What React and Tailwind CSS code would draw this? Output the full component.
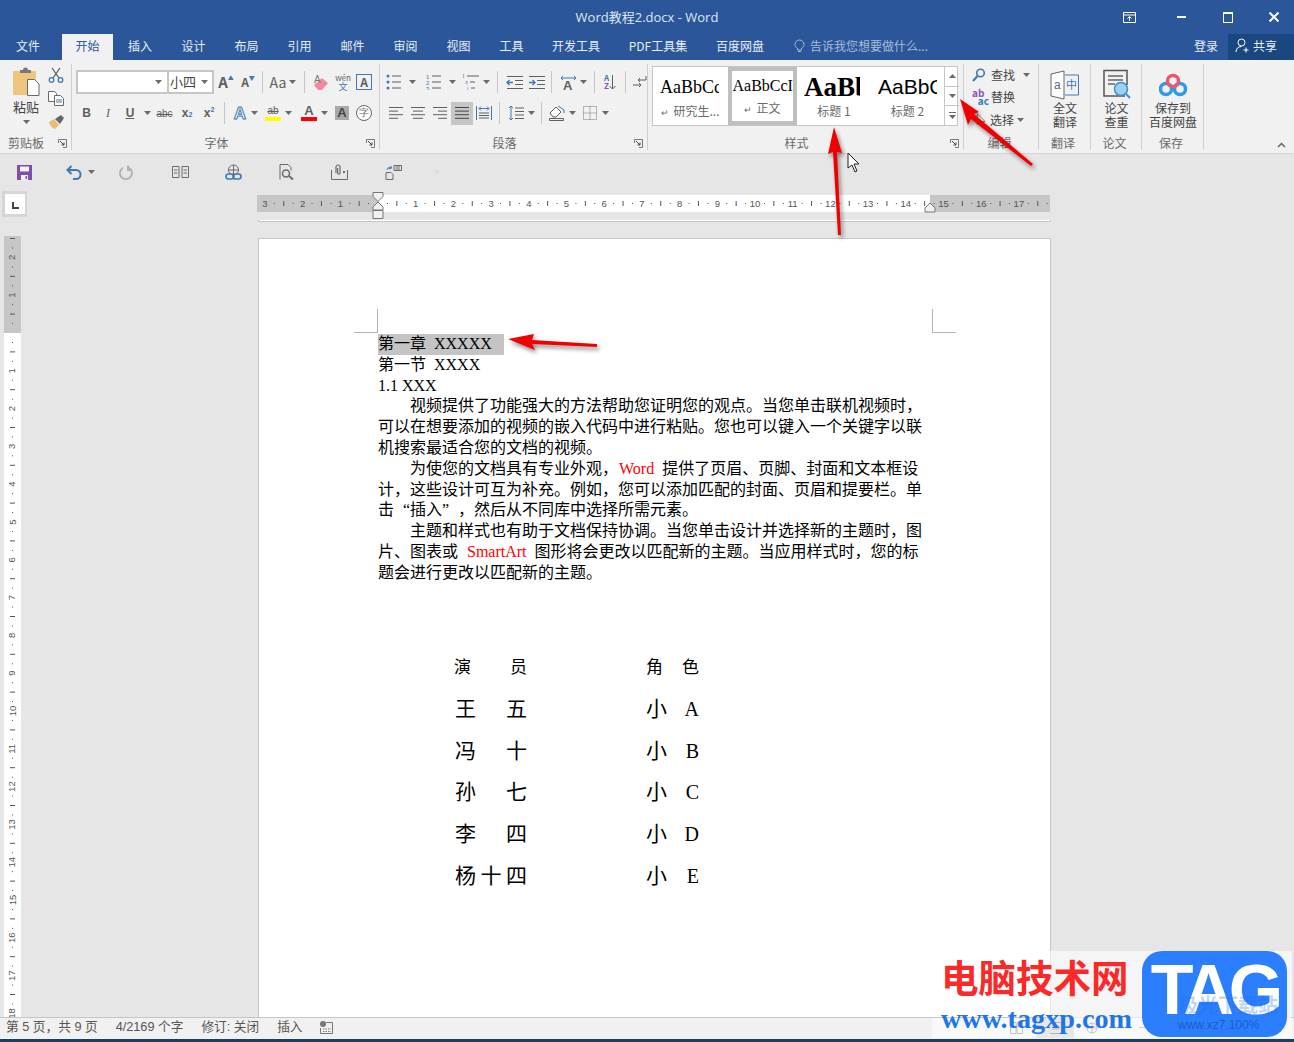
import React from "react";

const tabs = [
  ["文件", "w-[62px] pr-[6px]"],
  ["开始", "w-[51px] bg-[#f1f1f1] text-[#2b579a]"],
  ["插入", "w-[54px]"],
  ["设计", "w-[53px]"],
  ["布局", "w-[53px]"],
  ["引用", "w-[53px]"],
  ["邮件", "w-[53px]"],
  ["审阅", "w-[53px]"],
  ["视图", "w-[53px]"],
  ["工具", "w-[53px]"],
  ["开发工具", "w-[76px]"],
  ["PDF工具集", "w-[88px]"],
  ["百度网盘", "w-[76px]"],
];

const Caret = () => (
  <svg width="7" height="4" viewBox="0 0 7 4" className="shrink-0">
    <path d="M0 0h7L3.500 4z" fill="#6a6a6a" />
  </svg>
);

const Launcher = () => (
  <svg width="9" height="9" viewBox="0 0 9 9" fill="none" stroke="#777">
    <path d="M.5 4V.5H8.500V8.500H5" />
    <path d="M2 2l4 4M6 3.500V6H3.500" stroke="#444" />
  </svg>
);

const Sep = ({ c = "" }) => <div className={`h-[22px] w-px shrink-0 bg-[#c6c6c6] ${c}`} />;

const Tool = ({ c = "w-[22px]", children }) => (
  <div className={`flex h-6 shrink-0 items-center justify-center ${c}`}>{children}</div>
);

// horizontal lines in the alignment buttons
const Lines = ({ rows, color = "#5f5f5f" }) => (
  <svg width="16" height="14" viewBox="0 0 16 14" stroke={color} fill="none">
    {rows.map(([a, b], i) => (
      <path key={i} d={`M${a} ${1.5 + i * 3.6}H${b}`} />
    ))}
  </svg>
);

const ListIcon = ({ marks }) => (
  <svg width="16" height="16" viewBox="0 0 16 16">
    {[2, 8, 14].map((y, i) => (
      <g key={y}>
        {marks === "dot" ? (
          <circle cx="2" cy={y} r="1.500" fill="#3f78b5" />
        ) : (
          <text x="0" y={y + 2.5} fontSize="6" fill="#3f78b5" fontFamily="Liberation Sans">
            {i + 1}
          </text>
        )}
        <path d={`M6 ${y}H15`} stroke="#5f5f5f" />
      </g>
    ))}
  </svg>
);

const Group = ({ c, label, launcher, children }) => (
  <div className={`flex h-full shrink-0 flex-col border-r border-[#d0d0d0] ${c}`}>
    <div className="min-h-0 flex-1">{children}</div>
    <div className="flex h-[14px] items-center text-[12px] text-[#6a6a6a]">
      <div className="flex-1" />
      <span className={`leading-none ${launcher ? "pr-[14px]" : "pl-[1px]"}`}>{label}</span>
      <div className="flex flex-1 justify-end pr-[4px]">{launcher && <Launcher />}</div>
    </div>
  </div>
);

const Big = ({ lines, children }) => (
  <div className="flex flex-col items-center pl-[1px] pt-[4px] text-[12px] leading-[14px] text-[#444]">
    <div className="flex h-[33px] items-center">{children}</div>
    {lines.map((l) => (
      <span key={l}>{l}</span>
    ))}
  </div>
);

function Clipboard() {
  const cell = "flex h-[22px] w-[22px] items-center justify-center";
  return (
    <Group c="w-[72px]" label="剪贴板" launcher>
      <div className="flex pl-[10px] pt-[3px]">
        <div className="flex w-[32px] flex-col items-center text-[13px] leading-[16px] text-[#444]">
          <svg width="30" height="29" viewBox="0 0 30 29">
            <rect x="2" y="4" width="23" height="24" rx="1" fill="#efc67d" />
            <path d="M9 5V3h3a2 2 0 0 1 5 0h3v3H9z" fill="#777" />
            <path d="M16.500 12.500h7l4.500 4.500v11.500H16.500z" fill="#fff" stroke="#6a6a6a" />
          </svg>
          <span className="mt-[3px]">粘贴</span>
          <div className="mt-[5px]"><Caret /></div>
        </div>
        <div className="ml-[3px] mt-[-3px] flex flex-col items-center gap-[1px]">
          <div className={cell}>
            <svg width="16" height="16" viewBox="0 0 16 16" fill="none" stroke="#5f5f5f" strokeWidth="1.300">
              <path d="M4 1l7 10M12 1L5 11" />
              <circle cx="3.500" cy="13" r="2.300" stroke="#3f78b5" />
              <circle cx="12.500" cy="13" r="2.300" stroke="#3f78b5" />
            </svg>
          </div>
          <div className={cell}>
            <svg width="16" height="15" viewBox="0 0 16 15" fill="#fff" stroke="#6a6a6a">
              <path d="M.5.500h6l2 2v8H.5z" />
              <path d="M6.500 4.500h6l3 3v7h-9z" />
              <path d="M8 9h6M8 11h6" stroke="#3f78b5" />
            </svg>
          </div>
          <div className={cell}>
            <svg width="17" height="15" viewBox="0 0 17 15">
              <path d="M1 8l5-3 5 6-4 4C5 15 1 11 1 8z" fill="#e9bd78" />
              <path d="M7 5l6-4 3 3-4 6z" fill="#666" />
            </svg>
          </div>
        </div>
      </div>
    </Group>
  );
}

function Font() {
  return (
    <Group c="w-[308px]" label="字体" launcher>
      <div className="flex flex-col gap-[7px] pl-[4px] pt-[6px] text-[#5f5f5f]">
        <div className="flex items-center">
          <div className="flex h-[24px] w-[91px] items-center justify-end border-2 border-r-0 border-[#c6c6c6] bg-white pr-[5px]">
            <Caret />
          </div>
          <div className="flex h-[24px] w-[47px] items-center justify-between border-2 border-[#c6c6c6] bg-white pl-[1px] pr-[4px] text-[13px] text-[#444]">
            小四
            <Caret />
          </div>
          <Tool c="ml-[1px] w-[22px] text-[15px] font-semibold">
            A<span className="mb-[9px] text-[6px] text-[#3f78b5]">▲</span>
          </Tool>
          <Tool c="w-[22px] text-[12px] font-semibold">
            A<span className="mb-[9px] text-[6px] text-[#3f78b5]">▼</span>
          </Tool>
          <Sep c="ml-[3px]" />
          <Tool c="ml-[4px] w-[22px] text-[14px]">Aa</Tool>
          <Caret />
          <Sep c="ml-[8px]" />
          <Tool c="ml-[5px] w-[22px]">
            <svg width="16" height="17" viewBox="0 0 16 17">
              <path d="M1 11l8-7 6 5-6 7H5z" fill="#ee8c9c" />
              <text x="1" y="9" fontSize="10" fill="#777" fontFamily="Liberation Sans">A</text>
            </svg>
          </Tool>
          <Tool c="w-[22px]">
            <div className="flex flex-col items-center text-[8px] leading-[9px]">
              <span>wén</span>
              <span className="text-[9px] text-[#3f78b5]">文</span>
            </div>
          </Tool>
          <div className="ml-[2px] flex h-[16px] w-[16px] items-center justify-center border border-[#3f78b5] text-[12px] font-bold leading-none">A</div>
        </div>
        <div className="flex items-center font-['Liberation_Sans',sans-serif] text-[12px]">
          <Tool c="w-[21px] font-bold">B</Tool>
          <Tool c="w-[22px] font-['Liberation_Serif',serif] italic">I</Tool>
          <Tool c="w-[22px] font-bold underline">U</Tool>
          <Tool c="w-[12px]"><Caret /></Tool>
          <Tool c="w-[23px] text-[10px] line-through">abc</Tool>
          <Tool c="w-[22px] font-bold">x<sub className="text-[7px] text-[#3f78b5]">2</sub></Tool>
          <Tool c="w-[22px] font-bold">x<sup className="text-[7px] text-[#3f78b5]">2</sup></Tool>
          <Sep c="ml-[4px]" />
          <Tool c="ml-[4px] w-[22px]">
            <span className="text-[17px] font-bold leading-none text-white [-webkit-text-stroke:1px_#3f78b5]">A</span>
          </Tool>
          <Caret />
          <Tool c="ml-[4px] w-[22px]">
            <div className="flex flex-col items-center">
              <span className="text-[10px] leading-[12px] line-through">ab</span>
              <div className="h-[4px] w-[16px] bg-[#ffff00]" />
            </div>
          </Tool>
          <div className="ml-[1px]"><Caret /></div>
          <Tool c="ml-[6px] w-[22px]">
            <div className="flex flex-col items-center">
              <span className="text-[13px] font-bold leading-[12px]">A</span>
              <div className="h-[4px] w-[16px] bg-[#ff0000]" />
            </div>
          </Tool>
          <div className="ml-[1px]"><Caret /></div>
          <div className="ml-[7px] flex h-[14px] w-[14px] items-center justify-center bg-[#a9a9a9] text-[13px] font-bold text-[#444]">A</div>
          <div className="ml-[7px] flex h-[16px] w-[16px] items-center justify-center rounded-full border border-[#666] bg-white text-[10px] leading-none">字</div>
        </div>
      </div>
    </Group>
  );
}

function Paragraph() {
  return (
    <Group c="w-[268px]" label="段落" launcher>
      <div className="flex flex-col gap-[7px] pl-[6px] pt-[6px]">
        <div className="flex items-center">
          <Tool c="w-[16px]"><ListIcon marks="dot" /></Tool>
          <Tool c="ml-[5px] w-[10px]"><Caret /></Tool>
          <Tool c="ml-[9px] w-[16px]"><ListIcon marks="num" /></Tool>
          <Tool c="ml-[5px] w-[10px]"><Caret /></Tool>
          <Tool c="ml-[3px] w-[22px]">
            <svg width="18" height="16" viewBox="0 0 18 16" stroke="#5f5f5f">
              <path d="M5 2h12M8 8h5M9 14h4" />
              <text x="0" y="4" fontSize="5" fill="#3f78b5" stroke="none">1</text>
              <text x="3" y="10" fontSize="5" fill="#3f78b5" stroke="none">a</text>
              <text x="5" y="15.500" fontSize="5" fill="#3f78b5" stroke="none">i</text>
            </svg>
          </Tool>
          <Tool c="w-[8px]"><Caret /></Tool>
          <Sep c="ml-[7px]" />
          <Tool c="ml-[5px] w-[22px]">
            <svg width="17" height="13" viewBox="0 0 17 13" stroke="#5f5f5f" fill="none">
              <path d="M1 .5h16M9 4.500h8M9 8.500h8M1 12.500h16" />
              <path d="M7 6.500H1M3.500 4L1 6.500 3.500 9" stroke="#3f78b5" strokeWidth="1.400" />
            </svg>
          </Tool>
          <Tool c="w-[22px]">
            <svg width="17" height="13" viewBox="0 0 17 13" stroke="#5f5f5f" fill="none">
              <path d="M1 .5h16M9 4.500h8M9 8.500h8M1 12.500h16" />
              <path d="M1 6.500h6M4.500 4L7 6.500 4.500 9" stroke="#3f78b5" strokeWidth="1.400" />
            </svg>
          </Tool>
          <Sep c="ml-[4px]" />
          <Tool c="ml-[5px] w-[22px]">
            <svg width="17" height="15" viewBox="0 0 17 15">
              <path d="M1 3h15M3 1L1 3l2 2M14 1l2 2-2 2" stroke="#3f78b5" fill="none" />
              <text x="3" y="14.500" fontSize="13" fontWeight="bold" fill="#5f5f5f" fontFamily="Liberation Sans">A</text>
            </svg>
          </Tool>
          <Tool c="w-[8px]"><Caret /></Tool>
          <Sep c="ml-[7px]" />
          <Tool c="ml-[4px] w-[22px]">
            <div className="flex items-center">
              <div className="flex flex-col text-[8px] font-bold leading-[8px]">
                <span className="text-[#3f78b5]">A</span>
                <span className="text-[#8a55b0]">Z</span>
              </div>
              <svg width="7" height="15" viewBox="0 0 7 15" stroke="#5f5f5f" fill="none">
                <path d="M3.500 0v14M.5 11l3 3 3-3" />
              </svg>
            </div>
          </Tool>
          <Sep c="ml-[4px]" />
          <Tool c="ml-[3px] w-[22px]">
            <svg width="14" height="14" viewBox="0 0 14 14" stroke="#5f5f5f" fill="none">
              <path d="M13 1v4H5M7 3L5 5l2 2M0 10h8M6 8l2 2-2 2" />
            </svg>
          </Tool>
        </div>
        <div className="flex items-center">
          <Tool c="ml-[-1px] w-[22px]"><Lines rows={[[1, 15], [1, 10], [1, 15], [1, 10]]} /></Tool>
          <Tool><Lines rows={[[1, 15], [3, 13], [1, 15], [3, 13]]} /></Tool>
          <Tool><Lines rows={[[1, 15], [6, 15], [1, 15], [6, 15]]} /></Tool>
          <div className="flex h-[23px] w-[22px] items-center justify-center bg-[#c6c6c6]">
            <Lines rows={[[1, 15], [1, 15], [1, 15], [1, 15]]} color="#444" />
          </div>
          <Tool>
            <svg width="16" height="16" viewBox="0 0 16 16" fill="none" stroke="#5f5f5f">
              <path d="M.5 1v14M15.500 1v14" stroke="#3f78b5" />
              <path d="M3 3.500h10M5 1.500L3 3.500l2 2M11 1.500l2 2-2 2" stroke="#3f78b5" />
              <path d="M3 8h10M3 10.500h10M3 13h10" />
            </svg>
          </Tool>
          <Sep c="ml-[4px]" />
          <Tool c="ml-[5px] w-[22px]">
            <svg width="16" height="16" viewBox="0 0 16 16" fill="none" stroke="#5f5f5f">
              <path d="M7 3h9M7 6.500h9M7 10h9M7 13.500h9" />
              <path d="M3 1v14M1 3l2-2 2 2M1 13l2 2 2-2" stroke="#3f78b5" />
            </svg>
          </Tool>
          <Tool c="w-[8px]"><Caret /></Tool>
          <Sep c="ml-[6px]" />
          <Tool c="ml-[4px] w-[22px]">
            <svg width="18" height="16" viewBox="0 0 18 16" fill="none" stroke="#5f5f5f">
              <path d="M2 8l6-6 5 5-5 5H5z" fill="#fff" />
              <path d="M10 1l6 4v3" stroke="#3f78b5" />
              <path d="M1.500 13.500h14v2h-14z" />
            </svg>
          </Tool>
          <Tool c="w-[8px]"><Caret /></Tool>
          <Tool c="ml-[3px] w-[22px]">
            <svg width="14" height="14" viewBox="0 0 14 14" fill="none" stroke="#777" strokeDasharray="1 1">
              <path d="M.5.500h13v13H.5zM.5 7h13M7 .5v13" />
            </svg>
          </Tool>
          <Tool c="w-[8px]"><Caret /></Tool>
        </div>
      </div>
    </Group>
  );
}

const StyleItem = ({ c, f, w = "w-[59px]", name, mark }) => (
  <div className={`flex h-full shrink-0 flex-col overflow-hidden text-black ${c}`}>
    <span className={`ml-[7px] mt-[6px] h-[28px] overflow-hidden whitespace-nowrap leading-[28px] ${w} ${f}`}>AaBbCc</span>
    <span className="text-center text-[12px] leading-[20px] text-[#6a6a6a]">
      {mark && <span className="mr-[4px] text-[9px]">↵</span>}
      {name}
    </span>
  </div>
);

function Styles() {
  const cell = "flex flex-1 items-center justify-center";
  return (
    <Group c="w-[316px]" label="样式" launcher>
      <div className="ml-[4px] mt-[2px] flex h-[60px] w-[306px] border border-[#c6c6c6] bg-white">
        <StyleItem c="w-[75px]" f="font-['Liberation_Serif',serif] text-[18px]" name="研究生..." mark />
        <div className="flex h-full w-[69px] shrink-0 flex-col items-center overflow-hidden border-4 border-[#bfbfbf] text-[#444]">
          <span className="mt-[2px] h-[26px] w-[60px] overflow-hidden whitespace-nowrap text-center font-['Liberation_Serif',serif] text-[16px] leading-[26px] text-black">AaBbCcI</span>
          <span className="text-[12px] leading-[18px] text-[#6a6a6a]"><span className="mr-[4px] text-[9px]">↵</span>正文</span>
        </div>
        <StyleItem c="w-[74px]" w="w-[56px]" f="font-['Liberation_Serif',serif] text-[27px] font-bold" name="标题 1" />
        <StyleItem c="w-[73px]" f="font-['Liberation_Sans',sans-serif] text-[21px]" name="标题 2" />
        <div className="flex w-[15px] shrink-0 flex-col border-l border-[#c6c6c6]">
          <div className={`${cell} border-b border-[#c6c6c6]`}>
            <svg width="7" height="4" viewBox="0 0 7 4"><path d="M0 4h7L3.500 0z" fill="#6a6a6a" /></svg>
          </div>
          <div className={`${cell} border-b border-[#c6c6c6]`}>
            <Caret />
          </div>
          <div className={cell}>
            <svg width="7" height="7" viewBox="0 0 7 7"><path d="M0 0h7v1H0zM0 3h7L3.500 7z" fill="#6a6a6a" /></svg>
          </div>
        </div>
      </div>
    </Group>
  );
}

function Editing() {
  return (
    <Group c="w-[75px]" label="编辑">
      <div className="flex flex-col gap-[1.500px] pl-[8px] text-[12px] text-[#444]">
        <div className="flex h-[21px] items-center gap-[5px]">
          <svg width="14" height="14" viewBox="0 0 14 14" fill="none" strokeWidth="1.600">
            <circle cx="8.500" cy="5" r="3.800" stroke="#3f78b5" />
            <path d="M5.500 8L1 13" stroke="#3f78b5" strokeWidth="2" />
          </svg>
          查找
          <div className="ml-[3px]"><Caret /></div>
        </div>
        <div className="flex h-[21px] items-center gap-[2px]">
          <div className="flex w-[17px] flex-col text-[10px] font-bold leading-[8px]">
            <span className="text-[#8a55b0]">ab</span>
            <span className="text-right text-[#3f78b5]">ac</span>
          </div>
          替换
        </div>
        <div className="flex h-[21px] items-center gap-[1px] pl-[18px]">
          选择
          <div className="ml-[2px]"><Caret /></div>
        </div>
      </div>
    </Group>
  );
}

const TranslateIcon = () => (
  <svg width="30" height="30" viewBox="0 0 30 30" fill="none">
    <path d="M1 4l13-3v28L1 26z" stroke="#666" fill="#fff" />
    <path d="M15 5h13.500v20H15" stroke="#3f78b5" />
    <text x="4" y="19" fontSize="12" fill="#666" fontFamily="Liberation Sans">a</text>
    <text x="16" y="19" fontSize="11" fill="#3f78b5" fontFamily="Noto Sans CJK SC">中</text>
  </svg>
);

const PaperIcon = () => (
  <svg width="29" height="32" viewBox="0 0 29 32" fill="none">
    <path d="M23 27H2V1.500h23V16" stroke="#555" strokeWidth="1.500" />
    <path d="M6 7h15M6 11h15M6 15h7" stroke="#666" strokeWidth="1.500" />
    <circle cx="19" cy="20" r="6.500" fill="#9fd0f2" stroke="#3f8fcb" strokeWidth="1.500" />
    <path d="M24 25l4 4" stroke="#3f8fcb" strokeWidth="2" />
  </svg>
);

const CloudIcon = () => (
  <svg width="28" height="24" viewBox="0 0 28 24" fill="none" strokeWidth="3.500">
    <circle cx="7" cy="16" r="5.500" stroke="#2f9be8" />
    <circle cx="21" cy="16" r="5.500" stroke="#2f9be8" />
    <circle cx="14" cy="8" r="5.500" stroke="#e8596f" />
  </svg>
);

function Ribbon() {
  return (
    <div className="flex h-[94px] shrink-0 items-stretch border-b border-[#d4d4d4] bg-[#f1f1f1] pb-[3px] pt-[4px] font-['Noto_Sans_CJK_SC',sans-serif]">
      <Clipboard />
      <Font />
      <Paragraph />
      <Styles />
      <Editing />
      <Group c="w-[52px]" label="翻译">
        <Big lines={["全文", "翻译"]}><TranslateIcon /></Big>
      </Group>
      <Group c="w-[51px]" label="论文">
        <Big lines={["论文", "查重"]}><PaperIcon /></Big>
      </Group>
      <Group c="w-[62px]" label="保存">
        <Big lines={["保存到", "百度网盘"]}><CloudIcon /></Big>
      </Group>
      <div className="flex flex-1 items-end justify-end pb-[2px] pr-[8px]">
        <svg width="9" height="6" viewBox="0 0 9 6" fill="none" stroke="#666" strokeWidth="1.500">
          <path d="M1 5l3.500-3.500L8 5" />
        </svg>
      </div>
    </div>
  );
}

function Quick() {
  const qc = "flex h-[20px] w-[20px] items-center justify-center";
  return (
    <div className="flex h-[36px] shrink-0 items-center bg-[#e6e6e6] pl-[14px]">
      <div className={qc}>
        <svg width="15" height="15" viewBox="0 0 15 15">
          <path d="M0 0h15v15H0z" fill="#7d4fa8" />
          <path d="M3 1.500h9v5H3z" fill="#f1f1f1" />
          <path d="M4 10h7v5H4z" fill="#f1f1f1" />
          <path d="M8.500 11h1.500v3H8.500z" fill="#7d4fa8" />
        </svg>
      </div>
      <div className={`ml-[30px] ${qc}`}>
        <svg width="16" height="15" viewBox="0 0 16 15" fill="none" stroke="#3f78b5" strokeWidth="2">
          <path d="M5.500 1L1.500 5l4 4M2 5h8a4.500 4.500 0 0 1 0 9H7" />
        </svg>
      </div>
      <div className="ml-[4px]"><Caret /></div>
      <div className={`ml-[21px] ${qc}`}>
        <svg width="14" height="15" viewBox="0 0 14 15" fill="none" stroke="#b4b4b4" strokeWidth="2">
          <path d="M9 2.500a6 6 0 1 1-5 .4M9 .5v4.500H13" />
        </svg>
      </div>
      <div className={`ml-[34px] ${qc}`}>
        <svg width="17" height="12" viewBox="0 0 17 12" fill="none" stroke="#6a6a6a">
          <path d="M.5.500h6.500v11H.5zM10 .5h6.500v11H10zM2 4h3.500M2 7h3.500M11.500 4H15M11.500 7H15" />
        </svg>
      </div>
      <div className={`ml-[33px] ${qc}`}>
        <svg width="17" height="17" viewBox="0 0 17 17" fill="none" stroke="#6a6a6a">
          <circle cx="8.500" cy="6" r="5" />
          <path d="M3.500 6h10M8.500 1v10" />
          <rect x="1" y="10" width="8" height="5" rx="2.500" stroke="#3f78b5" strokeWidth="1.600" />
          <rect x="8" y="10" width="8" height="5" rx="2.500" stroke="#3f78b5" strokeWidth="1.600" />
        </svg>
      </div>
      <div className={`ml-[33px] ${qc}`}>
        <svg width="15" height="16" viewBox="0 0 15 16" fill="none" stroke="#6a6a6a">
          <path d="M1 15.500V.5h8l3 3v3" />
          <circle cx="7" cy="9.500" r="3.500" strokeWidth="1.500" />
          <path d="M10 12l4 3.500" strokeWidth="2" />
        </svg>
      </div>
      <div className={`ml-[33px] ${qc}`}>
        <svg width="17" height="16" viewBox="0 0 17 16" fill="none" stroke="#6a6a6a">
          <path d="M.5 6v9.500h16V6" />
          <path d="M5 9V3a2 2 0 0 1 4 0v6a1.200 1.200 0 0 1-2.400 0V4" strokeWidth="1.200" />
          <path d="M12 7h2v2h-2z" fill="#3f78b5" stroke="none" />
        </svg>
      </div>
      <div className={`ml-[34px] ${qc}`}>
        <svg width="17" height="16" viewBox="0 0 17 16" fill="none" stroke="#6a6a6a">
          <path d="M1 8.500h5l2 2v5H1z" />
          <path d="M9 1.500h7.500v5H9zM10.500 3h4.500M10.500 5h4.500" />
          <path d="M2 6a3 3 0 0 1 5-2M6 2v2.500H3.500" stroke="#3f78b5" />
        </svg>
      </div>
      <div className="ml-[32px] text-[7px] text-[#d6d6d6]">▾</div>
    </div>
  );
}

function HRuler() {
  const x0 = 121;
  const step = 37.7;
  const cells = [];
  for (let n = -4; n <= 18; n++) {
    const x = x0 + n * step;
    if (n !== 0 && n >= -3 && n <= 17) {
      cells.push(
        <text key={`n${n}`} x={x} y="16" fontSize="9.500" fill="#555" textAnchor="middle" fontFamily="Liberation Sans">
          {Math.abs(n)}
        </text>
      );
    }
    [0.25, 0.5, 0.75].forEach((f) => {
      const tx = x + f * step;
      if (tx < 1 || tx > 792) return;
      cells.push(<path key={`${n}${f}`} d={f === 0.5 ? `M${tx} 10v5` : `M${tx} 12v1`} stroke="#555" />);
    });
  }
  return (
    <svg width="793" height="29" viewBox="0 0 793 29" className="mt-[1px] block">
      <rect x="0" y="4" width="793" height="17" fill="#fff" />
      <rect x="0" y="4" width={x0} height="17" fill="#c6c6c6" />
      <rect x="673" y="4" width="120" height="17" fill="#c6c6c6" />
      {cells}
      <path d={`M${x0 - 5} 1.500h10v4l-5 5-5-5z`} fill="#f1f1f1" stroke="#777" />
      <path d={`M${x0} 11l5 5v3h-10v-3z`} fill="#f1f1f1" stroke="#777" />
      <path d={`M${x0 - 5} 19.500h10v8h-10z`} fill="#f1f1f1" stroke="#777" />
      <path d="M673 12l5 5v4h-10v-4z" fill="#f1f1f1" stroke="#777" />
    </svg>
  );
}

function VRuler() {
  const y0 = 97;
  const step = 37.8;
  const cells = [];
  for (let n = -3; n <= 18; n++) {
    const y = y0 + n * step;
    if (n !== 0 && n >= -2) {
      cells.push(
        <text
          key={`n${n}`}
          x="8.500"
          y={y + 3}
          fontSize="9.500"
          fill="#555"
          textAnchor="middle"
          fontFamily="Liberation Sans"
          transform={`rotate(-90 8.500 ${y})`}
        >
          {Math.abs(n)}
        </text>
      );
    }
    [0.25, 0.5, 0.75].forEach((f) => {
      const ty = y + f * step;
      if (ty < 1 || ty > 781) return;
      cells.push(<path key={`${n}${f}`} d={f === 0.5 ? `M6 ${ty}h5` : `M8 ${ty}h1`} stroke="#555" />);
    });
  }
  return (
    <svg width="17" height="781" viewBox="0 0 17 781" className="ml-[4px] mt-[19px] block">
      <rect width="17" height="781" fill="#fff" />
      <rect width="17" height={y0} fill="#c6c6c6" />
      {cells}
    </svg>
  );
}

const docLines = [
  ["第一章  XXXXX", "sel"],
  ["第一节  XXXX"],
  ["1.1 XXX"],
  ["视频提供了功能强大的方法帮助您证明您的观点。当您单击联机视频时，", "ind"],
  ["可以在想要添加的视频的嵌入代码中进行粘贴。您也可以键入一个关键字以联"],
  ["机搜索最适合您的文档的视频。"],
  [["为使您的文档具有专业外观，", "Word", "  提供了页眉、页脚、封面和文本框设"], "ind"],
  ["计，这些设计可互为补充。例如，您可以添加匹配的封面、页眉和提要栏。单"],
  [
    <>
      击<span className="inline-block w-[16px] text-right">“</span>插入<span className="inline-block w-[16px] text-left">”</span>，然后从不同库中选择所需元素。
    </>,
  ],
  ["主题和样式也有助于文档保持协调。当您单击设计并选择新的主题时，图", "ind"],
  [["片、图表或  ", "SmartArt", "  图形将会更改以匹配新的主题。当应用样式时，您的标"]],
  ["题会进行更改以匹配新的主题。"],
];

const cast = [
  ["王", "五", "A"],
  ["冯", "十", "B"],
  ["孙", "七", "C"],
  ["李", "四", "D"],
];

function Page() {
  return (
    <div className="relative h-[780px] w-[793px] border border-b-0 border-[#c6c6c6] bg-white pl-[119px] pt-[95px] font-['Liberation_Serif','Noto_Sans_CJK_SC',serif] text-[16px] text-black">
      <div className="absolute left-[95px] top-[70px] h-[24px] w-[24px] border-b border-r border-[#b4b4b4]" />
      <div className="absolute left-[673px] top-[70px] h-[24px] w-[24px] border-b border-l border-[#b4b4b4]" />
      <div className="w-[544px]">
        {docLines.map(([t, kind], i) => (
          <div key={i} className={`whitespace-pre leading-[20.8px] ${kind === "ind" ? "pl-[32px]" : ""}`}>
            {kind === "sel" ? (
              <span className="inline-block w-[126px] bg-[#c4c4c4]">{t}</span>
            ) : Array.isArray(t) ? (
              <>
                {t[0]}
                <span className="ml-[1px] text-[#ff0000]">{t[1]}</span>
                {t[2]}
              </>
            ) : (
              t
            )}
          </div>
        ))}
      </div>
      <div className="ml-[76px] mt-[63px] w-[250px]">
        <div className="flex h-[42px] items-center text-[17px]">
          <div className="flex w-[73px] justify-between"><span>演</span><span>员</span></div>
          <div className="ml-[119px] flex w-[53px] justify-between"><span>角</span><span>色</span></div>
        </div>
        {cast.map(([a, b, r]) => (
          <div key={r} className="flex h-[41.800px] items-center text-[21px]">
            <div className="ml-[1px] flex w-[72px] justify-between"><span>{a}</span><span>{b}</span></div>
            <div className="ml-[119px] flex w-[53px] justify-between"><span>小</span><span className="text-[20px]">{r}</span></div>
          </div>
        ))}
        <div className="flex h-[41.800px] items-center text-[21px]">
          <div className="ml-[1px] flex w-[72px] justify-between"><span>杨</span><span>十</span><span>四</span></div>
          <div className="ml-[119px] flex w-[53px] justify-between"><span>小</span><span className="text-[20px]">E</span></div>
        </div>
      </div>
    </div>
  );
}

function Status() {
  return (
    <div className="flex h-[22px] shrink-0 items-center gap-[18px] border-t border-[#c6c6c6] bg-[#f1f1f1] pb-[2px] pl-[6px] font-['Liberation_Sans','Noto_Sans_CJK_SC',sans-serif] text-[12.700px] text-[#555]">
      <span>第 5 页，共 9 页</span>
      <span>4/2169 个字</span>
      <span>修订: 关闭</span>
      <span>插入</span>
      <svg width="13" height="13" viewBox="0 0 13 13" className="ml-[-1px]">
        <circle cx="3" cy="3" r="3" fill="#777" />
        <path d="M6 1.500h6.500v11H.5V7" fill="none" stroke="#777" />
        <path d="M3 8h8M3 10.500h8" stroke="#777" strokeDasharray="1.500 1" />
      </svg>
      <div className="ml-auto flex h-full items-center pr-[20px]">
        <svg width="13" height="12" viewBox="0 0 13 12" fill="none" stroke="#666">
          <path d="M.5.500h5.500v11H.5zM7 .5h5.500v11H7z" />
        </svg>
        <div className="ml-[13px] flex h-[21px] w-[38px] items-center justify-center bg-[#c6c6c6]">
          <svg width="13" height="12" viewBox="0 0 13 12" fill="none" stroke="#444">
            <path d="M.5.500h12v11H.5zM3 4h7M3 7h7" />
          </svg>
        </div>
        <svg width="13" height="12" viewBox="0 0 13 12" fill="none" stroke="#666" className="ml-[12px]">
          <circle cx="6" cy="6" r="5" />
          <path d="M1 6h10M6 1v10" />
        </svg>
        <div className="ml-[40px] h-px w-[36px] bg-[#888]" />
        <div className="h-[11px] w-[3px] bg-[#555]" />
        <div className="h-px w-[56px] bg-[#888]" />
        <span className="ml-[6px] w-[34px] text-right text-[12px]">100%</span>
      </div>
    </div>
  );
}

function Watermark() {
  return (
    <div className="pointer-events-none absolute left-[932px] top-[951px] h-[87px] w-[362px] font-['Noto_Sans_CJK_SC',sans-serif]">
      <div className="absolute right-[2px] top-0 h-[87px] w-[243px] bg-white/60" />
      <div className="absolute left-0 top-[67px] h-[20px] w-[118px] bg-white/60" />
      <span className="absolute left-[9px] top-0 whitespace-nowrap text-[37.500px] font-bold leading-[50px] text-[#fb2a2a]">电脑技术网</span>
      <span className="absolute left-[9px] top-[52px] whitespace-nowrap font-['Liberation_Serif',serif] text-[28.200px] font-bold leading-[32px] text-[#1f76e8]">www.tagxp.com</span>
      <div className="absolute left-[210px] top-0 flex h-[86px] w-[145px] items-center justify-center overflow-hidden rounded-[20px] bg-[#2b7fff] pb-[8px]">
        <span className="font-['Liberation_Sans',sans-serif] text-[70px] font-bold leading-none tracking-[-5px] text-white">TAG</span>
        <span className="absolute left-[36px] top-[44px] whitespace-nowrap text-[20px] font-bold leading-none text-[#1f6fd8]/30">极光下载站</span>
        <span className="absolute left-[36px] top-[68px] whitespace-nowrap font-['Liberation_Sans',sans-serif] text-[12px] leading-none text-[#14509f]/70">www.xz7.100%</span>
      </div>
    </div>
  );
}

function Arrows() {
  return (
    <svg
      width="1294"
      height="1042"
      viewBox="0 0 1294 1042"
      className="pointer-events-none absolute left-0 top-0 drop-shadow-[2px_3px_2px_rgba(0,0,0,0.45)]"
    >
      <path d="M960 99l19 13-5 2 59 50-2 2-60-47-3 6z" fill="#f00000" />
      <path d="M834 127l8 26-5-1 4 83h-3l-5-83-5 2z" fill="#f00000" />
      <path d="M508 339l26-5-2 6 65 4v3l-65-3 3 6z" fill="#f00000" />
    </svg>
  );
}

const Cursors = () => (
  <>
    <svg width="14" height="21" viewBox="0 0 14 21" className="pointer-events-none absolute left-[847px] top-[152px]">
      <path d="M1 1v15l4-3 3 7 2-1-3-7h5z" fill="#fff" stroke="#222" />
    </svg>
    <svg width="11" height="15" viewBox="0 0 14 21" className="pointer-events-none absolute left-[976px] top-[113px]">
      <path d="M1 1v15l4-3 3 7 2-1-3-7h5z" fill="#fff" stroke="#555" />
    </svg>
  </>
);

export default function App() {
  return (
    <div className="relative flex h-[1042px] w-[1294px] flex-col overflow-hidden bg-[#e6e6e6] font-['Liberation_Sans','Noto_Sans_CJK_SC',sans-serif]">
      <div className="flex h-[34px] shrink-0 items-center bg-[#2b579a] text-white">
        <div className="flex-1" />
        <span className="pt-[1px] font-['Open_Sans','Noto_Sans_CJK_SC',sans-serif] text-[13px] text-[#dfe7f2]">Word教程2.docx - Word</span>
        <div className="flex flex-1 items-center justify-end">
          <svg width="13" height="11" viewBox="0 0 13 11" fill="none" stroke="#fff">
            <path d="M.5.500h12v10H.5zM.5 3h12" />
            <path d="M6.500 9V4.500M4.500 6.500l2-2 2 2" />
          </svg>
          <div className="ml-[41px] h-[2px] w-[9px] bg-white" />
          <div className="ml-[37px] h-[11px] w-[10px] border border-t-2 border-white" />
          <svg width="10" height="10" viewBox="0 0 10 10" className="ml-[36px] mr-[15px]" stroke="#fff" strokeWidth="2">
            <path d="M.5.500l9 9M9.500.500l-9 9" />
          </svg>
        </div>
      </div>
      <div className="flex h-[26px] shrink-0 items-stretch bg-[#2b579a] font-['Noto_Sans_CJK_SC',sans-serif] text-[12px] text-[#e8edf5]">
        {tabs.map(([t, c]) => (
          <div key={t} className={`flex items-center justify-center pb-[3px] ${c}`}>{t}</div>
        ))}
        <div className="ml-[16px] flex items-center gap-[5px] pb-[2px] text-[#a8bcd8]">
          <svg width="11" height="14" viewBox="0 0 11 14" fill="none" stroke="#a8bcd8">
            <path d="M3.500 9.500C2 8.500 1 7.200 1 5.500a4.500 4.500 0 0 1 9 0c0 1.700-1 3-2.500 4v1.500h-4zM4 12.500h3" />
          </svg>
          告诉我您想要做什么...
        </div>
        <div className="flex-1" />
        <div className="flex items-center pb-[3px] pr-[10px]">登录</div>
        <div className="flex w-[66px] items-center gap-[3px] bg-[#1a477f] pb-[3px] pl-[7px]">
          <svg width="15" height="15" viewBox="0 0 15 15" fill="none" stroke="#fff">
            <circle cx="6.500" cy="4.500" r="3.500" />
            <path d="M1 14c0-3 2-5.500 5.500-5.500M11 9.500v5M8.500 12h5" />
          </svg>
          共享
        </div>
      </div>
      <Ribbon />
      <Quick />
      <div className="flex min-h-0 flex-1 overflow-hidden">
        <div className="w-[257px] shrink-0">
          <div className="ml-[2px] mt-[1px] flex h-[26px] w-[25px] items-center justify-center bg-[#d6d6d6]">
            <div className="flex h-[20px] w-[20px] items-center justify-center bg-white">
              <div className="mb-[-2px] ml-[1px] h-[7px] w-[7px] border-b-2 border-l-2 border-[#444]" />
            </div>
          </div>
          <VRuler />
        </div>
        <div className="w-[794px] shrink-0">
          <HRuler />
          <div className="ml-[1px] h-[2px] w-[793px] border-x border-b border-[#c6c6c6] bg-white" />
          <div className="ml-[1px] mt-[16px]">
            <Page />
          </div>
        </div>
      </div>
      <Status />
      <div className="h-[3px] shrink-0 bg-[#1c3f5c]" />
      <Watermark />
      <Cursors />
      <Arrows />
    </div>
  );
}
